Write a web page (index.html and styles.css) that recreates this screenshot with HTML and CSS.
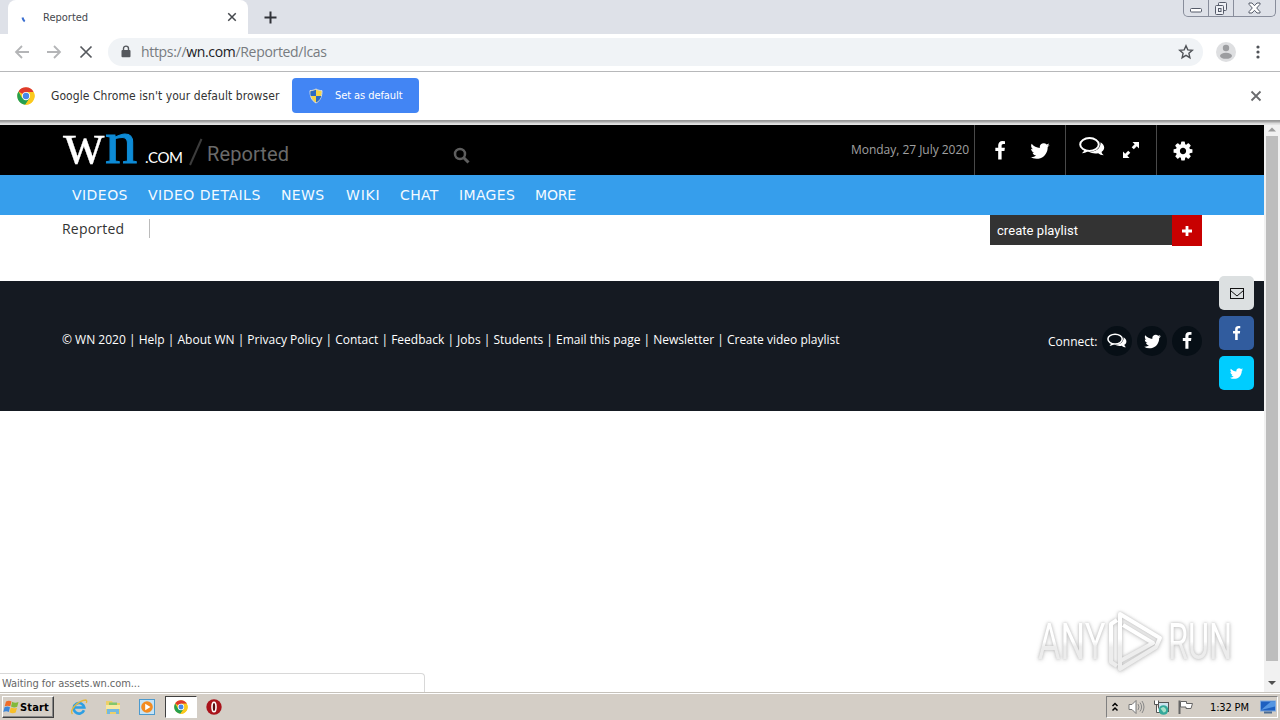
FILE: index.html
```html
<!DOCTYPE html>
<html lang="en">
<head>
<meta charset="utf-8">
<title>Reported</title>
<link rel="stylesheet" href="styles.css">
</head>
<body>
<svg class="defs" width="0" height="0">
  <defs>
    <linearGradient id="mark" x1="0" y1="0" x2="0" y2="1"><stop offset=".45" stop-color="#fff"/><stop offset=".6" stop-color="#ededed"/></linearGradient>
    <symbol id="facebook" viewBox="0 0 1792 1792"><path d="M1343 12v264h-157q-86 0-116 36t-30 108v189h293l-39 296h-254v759h-306v-759h-255v-296h255v-218q0-186 104-288.5t277-102.5q147 0 228 12z"/></symbol>
    <symbol id="twitter" viewBox="0 0 1792 1792"><path d="M1684 408q-67 98-162 167 1 14 1 42 0 130-38 259.500t-115.500 248.500-184.500 210.500-258 146-323 54.500q-271 0-496-145 35 4 78 4 225 0 401-138-105-2-188-64.500t-114-159.500q33 5 61 5 43 0 85-11-112-23-185.500-111.500t-73.500-205.500v-4q68 38 146 41-66-44-105-115t-39-154q0-88 44-163 121 149 294.500 238.500t371.500 99.500q-8-38-8-74 0-134 94.500-228.500t228.500-94.500q140 0 236 102 109-21 205-78-37 115-142 178 93-10 186-50z"/></symbol>
    <symbol id="cog" viewBox="0 0 1792 1792"><path d="M1152 896q0-106-75-181t-181-75-181 75-75 181 75 181 181 75 181-75 75-181zm512-109v222q0 12-8 23t-20 13l-185 28q-19 54-39 91 35 50 107 138 10 12 10 25t-9 23q-27 37-99 108t-94 71q-12 0-26-9l-138-108q-44 23-91 38-16 136-29 186-7 28-36 28h-222q-14 0-24.500-8.500t-11.500-21.500l-28-184q-49-16-90-37l-141 107q-10 9-25 9-14 0-25-11-126-114-165-168-7-10-7-23 0-12 8-23 15-21 51-66.500t54-70.500q-27-50-41-99l-183-27q-13-2-21-12.500t-8-23.500v-222q0-12 8-23t19-13l186-28q14-46 39-92-40-57-107-138-10-12-10-24 0-10 9-23 26-36 98.500-107.500t94.500-71.500q13 0 26 10l138 107q44-23 91-38 16-136 29-186 7-28 36-28h222q14 0 24.500 8.500t11.500 21.500l28 184q49 16 90 37l142-107q9-9 24-9 13 0 25 10 129 119 165 170 7 8 7 22 0 12-8 23-15 21-51 66.500t-54 70.500q26 50 41 98l183 28q13 2 21 12.500t8 23.500z"/></symbol>
    <symbol id="comments" viewBox="0 0 26 20"><ellipse cx="10.500" cy="7.500" rx="9.300" ry="6.400" fill="none" stroke="currentColor" stroke-width="2"/><path d="M5.500 12.500C5 14.500 4 15.500 2.800 16.200c3 0 5-1 6.500-2.400zM21.500 5.200c4.800 2.800 4.700 7.300 1 9.800.4 1.600 1.300 2.400 2.200 3.200-2.400 0-4-.7-5.500-2-3.600.6-6.700.1-9-1.200 7-.2 11.800-4 11.300-9.800z"/></symbol>
    <symbol id="expand" viewBox="0 0 18 18"><path d="M10.500 1H17v6.500l-2.200-2.200-3 3-2.100-2.100 3-3zM7.500 17H1v-6.500l2.200 2.200 3-3 2.100 2.100-3 3z"/></symbol>
    <symbol id="cross" viewBox="0 0 12 12"><path d="M1.500 1.500l9 9m0-9l-9 9" fill="none" stroke="currentColor" stroke-width="1.800"/></symbol>
    <symbol id="stop" viewBox="0 0 16 16"><path d="M2.500 2.500l11 11m0-11l-11 11" fill="none" stroke="currentColor" stroke-width="1.700"/></symbol>
    <symbol id="chrome" viewBox="0 0 48 48"><circle cx="24" cy="24" r="23" fill="#fbc91d"/><path d="M24 24L4 12A23 23 0 0 1 44 13H24z" fill="#df3a2c"/><path d="M24 24L14 30 4 12A23 23 0 0 0 22 47L34 30z" fill="#26a04f"/><path d="M24 13h20A23 23 0 0 1 22 47l12-17z" fill="#fbc91d"/><circle cx="24" cy="24" r="11" fill="#fff"/><circle cx="24" cy="24" r="8.500" fill="#4688e8"/></symbol>
  </defs>
</svg>

<header class="tabstrip">
  <div class="tab">
    <svg class="spinner" width="16" height="16" viewBox="0 0 16 16"><path d="M4.500 6.500q.4 2.400 2.200 3.900" fill="none" stroke="#3b6fd0" stroke-width="2"/></svg>
    <span class="tab-title">Reported</span>
    <svg class="tab-close" width="10" height="10"><use href="#cross"/></svg>
  </div>
  <svg class="new-tab" width="13" height="13" viewBox="0 0 13 13"><path d="M6.500 .5v12M.5 6.500h12" stroke="#303238" stroke-width="2"/></svg>
  <div class="window-controls">
    <span class="min"><svg width="14" height="7" viewBox="0 0 14 7"><rect x="1.500" y="1.500" width="11" height="3.500" rx="1" fill="#fff" stroke="#555b69"/></svg></span>
    <span class="max"><svg width="14" height="14" viewBox="0 0 14 14" fill="#eef0f5" stroke="#555b69"><rect x="4.500" y=".5" width="8" height="8" rx="1"/><rect x="1.500" y="3.500" width="8" height="9" rx="1"/><rect x="4.500" y="6.500" width="2.500" height="3"/></svg></span>
    <span class="exit"><svg width="13" height="12" viewBox="0 0 13 12"><path d="M1 1h3l2.500 2.700L9 1h3v1.300L8.700 6 12 9.700V11H9L6.500 8.300 4 11H1V9.700L4.300 6 1 2.300z" fill="#fff" stroke="#555b69"/></svg></span>
  </div>
</header>

<div class="toolbar">
  <svg class="nav-icon dim" width="16" height="14" viewBox="0 0 16 14"><path d="M15 7H2M8 1L2 7l6 6" fill="none" stroke="currentColor" stroke-width="1.800"/></svg>
  <svg class="nav-icon dim" width="16" height="14" viewBox="0 0 16 14"><path d="M1 7h13M8 1l6 6-6 6" fill="none" stroke="currentColor" stroke-width="1.800"/></svg>
  <svg class="nav-icon" width="16" height="16"><use href="#stop"/></svg>
  <div class="omnibox">
    <svg width="10" height="13" viewBox="0 0 10 13"><path d="M2.500 6V3.600a2.500 2.500 0 0 1 5 0V6" fill="none" stroke="#55585d" stroke-width="1.400"/><rect x=".5" y="5" width="9" height="7.200" rx="1" fill="#55585d"/></svg>
    <span class="url">https://<b>wn.com</b>/Reported/lcas</span>
    <svg class="star" width="16" height="16" viewBox="0 0 16 16"><path d="M8 1.800l1.800 4.100 4.500.4-3.400 3 1 4.400L8 11.400l-3.900 2.300 1-4.400-3.400-3 4.500-.4z" fill="none" stroke="#505358" stroke-width="1.400"/></svg>
  </div>
  <svg class="avatar" width="20" height="20" viewBox="0 0 20 20"><circle cx="10" cy="10" r="10" fill="#dedfe1"/><circle cx="10" cy="6" r="3.200" fill="#9c9da0"/><ellipse cx="10" cy="13.800" rx="6" ry="3" fill="#9c9da0"/></svg>
  <svg class="menu" width="4" height="14" viewBox="0 0 4 14" fill="#505358"><circle cx="2" cy="2" r="1.600"/><circle cx="2" cy="7" r="1.600"/><circle cx="2" cy="12" r="1.600"/></svg>
</div>

<div class="infobar">
  <svg width="18" height="18"><use href="#chrome"/></svg>
  <span class="info-text">Google Chrome isn't your default browser</span>
  <button class="default-btn">
    <svg width="14" height="16" viewBox="0 0 14 16"><path d="M7 1c2 1.200 4 1.600 6 1.600C13.200 8 11.500 12.500 7 15 2.500 12.500.8 8 1 2.600 3 2.600 5 2.200 7 1z" fill="#f5d547" stroke="#d8dde4"/><path d="M7 1.800V8H1.700C1.300 6 1.400 4 1.500 3.200 3.500 3 5 2.700 7 1.800zM7 8h5.300c-.7 3-2.500 5-5.300 6.400z" fill="#2c6bc4"/></svg>
    <span>Set as default</span>
  </button>
  <svg class="info-close" width="12" height="12"><use href="#cross"/></svg>
</div>

<div class="viewport">
  <main class="page">
    <div class="site-head">
      <div class="logo"><span class="w">w</span><span class="n">n</span><span class="com">.COM</span></div>
      <svg class="slash" width="14" height="28" viewBox="0 0 14 28"><path d="M1 27L12.500 1" stroke="#3c3c3c" stroke-width="2"/></svg>
      <span class="query">Reported</span>
      <svg class="search" width="17" height="17" viewBox="0 0 17 17" fill="none" stroke="#5e5e5e"><circle cx="7" cy="7" r="5" stroke-width="2.500"/><path d="M10.500 10.500l5 5" stroke-width="3"/></svg>
      <span class="date">Monday, 27 July 2020</span>
      <div class="tools social"><svg width="20" height="20"><use href="#facebook"/></svg><svg width="22" height="22"><use href="#twitter"/></svg></div>
      <div class="tools talk"><svg class="bubbles" width="26" height="20"><use href="#comments"/></svg><svg width="18" height="18"><use href="#expand"/></svg></div>
      <div class="tools settings"><svg width="22" height="22"><use href="#cog"/></svg></div>
    </div>
    <nav class="site-nav">
      <a class="n1">VIDEOS</a><a class="n2">VIDEO DETAILS</a><a class="n3">NEWS</a><a class="n4">WIKI</a><a class="n5">CHAT</a><a class="n6">IMAGES</a><a class="n7">MORE</a>
    </nav>
    <div class="subhead">
      <span class="crumb">Reported</span>
      <div class="playlist"><span class="playlist-name">create playlist</span><span class="add"><svg width="10" height="10" viewBox="0 0 10 10"><path d="M5 0v10M0 5h10" stroke="#fff" stroke-width="2.800"/></svg></span></div>
    </div>
    <footer class="site-foot">
      <p class="links">© WN 2020 | Help | About WN | Privacy Policy | Contact | Feedback | Jobs | Students | Email this page | Newsletter | Create video playlist</p>
      <div class="connect">
        <span class="connect-label">Connect:</span>
        <span class="disc"><svg width="20" height="16"><use href="#comments"/></svg></span>
        <span class="disc"><svg width="19" height="19"><use href="#twitter"/></svg></span>
        <span class="disc"><svg width="18" height="18"><use href="#facebook"/></svg></span>
      </div>
    </footer>
    <aside class="share">
      <span class="mail"><svg width="14" height="11" viewBox="0 0 14 11" fill="none" stroke="#111"><rect x=".5" y=".5" width="13" height="10"/><path d="M.5 2.500L7 8l6.500-5.500"/></svg></span>
      <span class="fb"><svg width="15" height="15"><use href="#facebook"/></svg></span>
      <span class="tw"><svg width="15" height="15"><use href="#twitter"/></svg></span>
    </aside>
    <div class="watermark">
      <span class="any">ANY</span>
      <svg width="58" height="64" viewBox="0 0 58 64" fill="none" stroke-linejoin="round"><path d="M14 51V4l40 24-4 9L14 59V51l33-18-30-18" stroke="url(#mark)" stroke-width="4"/><path d="M11 10l-6 4v38l6 4" stroke="url(#mark)" stroke-width="4"/></svg>
      <span class="run">RUN</span>
    </div>
    <div class="status">Waiting for assets.wn.com...</div>
  </main>
  <div class="scrollbar">
    <svg width="16" height="11" viewBox="0 0 16 11"><path d="M4 6.500l4-4 4 4z" fill="#9b9b9b"/></svg>
    <div class="thumb"></div>
    <svg class="down" width="16" height="11" viewBox="0 0 16 11"><path d="M4 4h8l-4 4z" fill="#505050"/></svg>
  </div>
</div>

<div class="taskbar">
  <div class="start">
    <svg width="17" height="16" viewBox="0 0 17 16"><path d="M3 2.500Q6 .8 8.500 2.500L7.300 7.300Q4.500 6 1.700 7.300z" fill="#ef6c28"/><path d="M9.200 2.800Q12 4.500 15.500 3L14.200 7.800Q11 9.200 8 7.500z" fill="#82b93c"/><path d="M1.500 8.200Q4.500 7 7 8.300L5.800 13Q3.300 11.500.3 13z" fill="#3c86d8"/><path d="M7.800 8.500Q11 10 14 8.700L12.700 13.500Q9.500 15 6.500 13.300z" fill="#f7bf2a"/></svg>
    <span>Start</span>
  </div>
  <div class="apps">
    <svg width="18" height="18" viewBox="0 0 18 18" fill="none"><path d="M14 12.300A5.300 5.300 0 1 1 14.300 9.500H5" stroke="#2d9fe3" stroke-width="2.600"/><path d="M2.500 16C-1 12 8 2.500 16 2c1.300 1 .8 2 .2 3" stroke="#e5b83c" stroke-width="1.300"/></svg>
    <svg width="18" height="18" viewBox="0 0 18 18"><path d="M2 3h6l1 2h7v11H2z" fill="#edcf69"/><path d="M5 4.500h8v4H5z" fill="#83c66b"/><path d="M2 7h14v4H2z" fill="#f7e9a2"/><path d="M3 16v-5h12v5h-3v-2H6v2z" fill="#74b9df"/></svg>
    <svg width="18" height="18" viewBox="0 0 18 18"><rect x="1.500" y="1.500" width="15" height="15" fill="#c5e3f6" stroke="#4c9ace"/><circle cx="9" cy="9" r="5.800" fill="#f38b20"/><path d="M7.200 5.800L12.500 9l-5.300 3.200z" fill="#fff"/></svg>
    <span class="active"><svg width="14" height="14"><use href="#chrome"/></svg></span>
    <svg width="18" height="18" viewBox="0 0 18 18"><circle cx="9" cy="9" r="7.700" fill="#a9131b"/><ellipse cx="9" cy="9" rx="2" ry="4.700" fill="#5a0d12" stroke="#fff" stroke-width="1.600"/></svg>
  </div>
  <div class="tray">
    <svg class="chev" width="8" height="12" viewBox="0 0 8 12"><path d="M1.500 5L4 2.500 6.500 5M1.500 9.500L4 7l2.500 2.500" fill="none" stroke="#000" stroke-width="1.500"/></svg>
    <svg class="sound" width="17" height="16" viewBox="0 0 17 16"><path d="M1 5.500h3l4-4v13l-4-4H1z" fill="#fff" stroke="#777"/><path d="M10 5q2 3 0 6M12 3.500q3.200 4.500 0 9M14 2q4 6 0 12" fill="none" stroke="#888"/></svg>
    <svg class="net" width="17" height="17" viewBox="0 0 17 17"><rect x="5.500" y="3.500" width="10" height="9" fill="#cbe4ee" stroke="#555"/><path d="M1.500 1.500v4h4v-4M3.500 5.500v8h4" fill="#fff" stroke="#555"/><circle cx="10.500" cy="11" r="4.800" fill="#35a99b"/><path d="M7.500 9.500q3-3 5 0t-2 4" fill="#a7e0c8"/></svg>
    <svg class="flag" width="17" height="16" viewBox="0 0 17 16"><path d="M2.500 15V1.500" stroke="#666" stroke-width="2"/><path d="M3.500 2.500h6v2h6l-1.500 5H9v-1.500H3.500z" fill="#fff" stroke="#666"/></svg>
    <span class="clock">1:32 PM</span>
    <svg width="16" height="14" viewBox="0 0 16 14"><rect x=".5" y="1" width="15" height="10" fill="#1d5fc0" stroke="#7fa9df"/><path d="M1 10L11 1.500h4v5z" fill="#5596e2"/><path d="M4 12.500h8" stroke="#4d6c92" stroke-width="2"/></svg>
  </div>
</div>
</body>
</html>
```

FILE: styles.css
```css
* { box-sizing: border-box; }
body { margin: 0; width: 1280px; height: 720px; overflow: hidden; display: flex; flex-direction: column; background: #fff; font-family: "Open Sans", "Noto Sans", sans-serif; color: #333; fill: currentColor; }
svg { display: block; flex: none; }
span, a, p { white-space: nowrap; }
.defs { position: absolute; }

.tabstrip { height: 34px; flex: none; display: flex; background: #dee1e8; padding-left: 8px; }
.tab { width: 240px; display: flex; align-items: center; padding-left: 10px; background: #fff; border-radius: 8px 8px 0 0; color: #45484d; }
.spinner { margin-top: 3px; }
.tab-title { margin-left: 9px; width: 184px; font-family: "DejaVu Sans Condensed", "DejaVu Sans", sans-serif; font-stretch: condensed; font-size: 11px; letter-spacing: 0; }
.new-tab { margin: 11px 0 0 16px; }
.window-controls { margin: 0 4px 0 auto; height: 17px; display: flex; border: 1px solid #888d9b; border-top: 0; border-radius: 0 0 5px 5px; color: #555b69; }
.window-controls span { display: flex; justify-content: center; border-right: 1px solid #888d9b; }
.window-controls .min { width: 25px; padding-top: 7px; }
.window-controls .max { width: 25px; padding-top: 2px; }
.window-controls .exit { width: 41px; padding-top: 2px; border: 0; }

.toolbar { height: 38px; flex: none; display: flex; align-items: center; padding: 0 20px 2px 14px; border-bottom: 1px solid #b7b8ba; color: #56595e; }
.nav-icon { margin-right: 16px; }
.nav-icon.dim { color: #b4b5b7; }
.omnibox { width: 1095px; height: 28px; margin-left: -2px; display: flex; align-items: center; padding: 0 9px 0 13px; border-radius: 14px; background: #f0f3f6; }
.url { margin-left: 10px; font-size: 14px; letter-spacing: -.32px; color: #777b80; }
.url b { font-weight: 400; color: #202124; }
.star { margin-left: auto; }
.avatar { margin-left: 13px; }
.menu { margin-left: auto; }

.infobar { height: 53px; flex: none; display: flex; align-items: center; padding: 0 18px 6px 17px; background: linear-gradient(#fff 48px, #929292 48px, #aaa 50px, #d4d4d4 51px, #e8e8e8 53px); color: #6a6b6e; }
.info-text { width: 240px; margin-left: 17px; font-family: "DejaVu Sans Condensed", "DejaVu Sans", sans-serif; font-stretch: condensed; font-size: 12px; letter-spacing: .07px; color: #333; text-indent: -1px; }
.default-btn { width: 127px; height: 35px; display: flex; align-items: center; gap: 12px; padding: 0 0 0 17px; border: 0; border-radius: 4px; background: #4285f4; color: #fff; font-family: "DejaVu Sans Condensed", "DejaVu Sans", sans-serif; font-stretch: condensed; font-size: 11px; letter-spacing: -.08px; }
.info-close { margin-left: auto; }

.viewport { flex: 1; display: flex; min-height: 0; }
.page { width: 1264px; position: relative; }
.scrollbar { width: 16px; display: flex; flex-direction: column; background: #f1f1f1; }
.thumb { width: 12px; height: 525px; margin-left: 2px; background: #bdbdbd; }
.down { margin-top: auto; margin-bottom: 4px; }

.site-head { height: 50px; display: flex; align-items: flex-start; padding-left: 62px; background: #000; color: #fff; }
.logo { width: 127px; height: 50px; display: flex; align-items: baseline; line-height: 34px; }
.logo .w, .logo .n { font-family: "Liberation Serif", serif; font-size: 60px; transform-origin: left; }
.logo .w { width: 43px; padding-left: 1px; transform: scaleX(.96); -webkit-text-stroke: .3px; }
.logo .n { width: 40px; color: #0d8bd6; font-size: 62px; transform: scaleX(1.04); -webkit-text-stroke: 1px; }
.logo .com { font-family: Lato, sans-serif; font-size: 15px; letter-spacing: -.3px; }
.slash { margin-top: 13px; }
.query { width: 246px; margin: 17px 0 0 4px; font-family: Roboto, sans-serif; font-size: 20px; line-height: 24px; letter-spacing: .1px; color: #6a6a6a; }
.search { margin-top: 22px; }
.date { width: 123px; margin: 15px 0 0 381px; font-size: 12px; line-height: 20px; letter-spacing: -.03px; color: #a0a0a0; }
.tools { height: 50px; width: 91px; display: flex; align-items: center; border-left: 1px solid #494949; padding-top: 2px; }
.social { padding-left: 15px; gap: 19px; }
.talk { padding-left: 13px; gap: 17px; }
.bubbles { margin-top: -8px; }
.talk svg:last-child { margin-top: -2px; }
.settings { padding-left: 15px; }

.site-nav { height: 40px; display: flex; align-items: center; padding-left: 72px; background: #369eec; color: #f4faff; font-family: "DejaVu Sans", sans-serif; font-size: 14px; letter-spacing: .35px; }
.site-nav .n1 { width: 76px; letter-spacing: .45px; }
.site-nav .n2 { width: 133px; letter-spacing: .5px; }
.site-nav .n3 { width: 65px; }
.site-nav .n4 { width: 54px; letter-spacing: .8px; }
.site-nav .n5 { width: 59px; }
.site-nav .n6 { width: 76px; }
.site-nav .n7 { letter-spacing: -.2px; }

.subhead { height: 66px; display: flex; justify-content: space-between; padding: 0 62px; }
.crumb { width: 88px; height: 19px; margin-top: 4px; border-right: 1px solid #bbb; font-size: 14px; line-height: 20px; letter-spacing: .2px; }
.playlist { width: 212px; height: 30px; display: flex; background: #333; color: #fff; }
.playlist-name { width: 182px; padding-left: 7px; font-family: Roboto, sans-serif; font-size: 13px; line-height: 31px; letter-spacing: .05px; }
.add { width: 30px; height: 31px; display: flex; align-items: center; justify-content: center; background: #c80000; }

.site-foot { height: 130px; display: flex; justify-content: space-between; padding: 45px 62px 0; background: #151a22; color: #fff; }
.links { margin: 5px 0 0; font-size: 12px; line-height: 18px; letter-spacing: .004px; }
.connect { height: 30px; display: flex; align-items: center; gap: 5px; font-size: 12px; }
.connect-label { width: 49px; }
.disc { width: 30px; height: 30px; display: flex; align-items: center; justify-content: center; border-radius: 50%; background: #070f16; }

.share { position: absolute; left: 1219px; top: 151px; display: flex; flex-direction: column; gap: 6px; color: #fff; }
.share span { width: 35px; height: 34px; display: flex; align-items: center; justify-content: center; border-radius: 5px; }
.share .mail { background: #dce0e1; }
.share .fb { background: #315c9e; }
.share .tw { background: #00cdff; }

.watermark { position: absolute; left: 1038px; top: 484px; display: flex; align-items: center; font-family: Roboto, "Liberation Sans", sans-serif; font-size: 50px; line-height: 64px; filter: drop-shadow(0 0 1.5px #bbb) drop-shadow(0 1px 2px #e2e2e2); }
.watermark span { flex: none; width: 104px; padding-top: 1px; transform-origin: left; background: linear-gradient(#fff 50%, #ececec 58%); background-clip: text; -webkit-background-clip: text; color: transparent; }
.watermark .any { margin-right: -36px; transform: scaleX(.69); }
.watermark .run { margin-left: 4px; transform: scaleX(.65); }
.status { position: absolute; left: 0; bottom: 0; width: 425px; height: 19px; padding-left: 2px; border: 1px solid #d8d8d8; border-width: 1px 1px 0 0; border-radius: 0 4px 0 0; background: #fff; color: #666; font-family: "DejaVu Sans Condensed", "DejaVu Sans", sans-serif; font-stretch: condensed; font-size: 11px; line-height: 19px; letter-spacing: -.06px; }

.taskbar { height: 28px; flex: none; display: flex; align-items: center; padding: 1px 2px 0; border-top: 1px solid #c6c2bb; background: #d4cec6; box-shadow: inset 0 1px #fff; color: #000; }
.start { width: 52px; height: 22px; display: flex; align-items: center; border: 1px solid; border-color: #fff #404040 #404040 #fff; box-shadow: inset -1px -1px #888; font-family: "DejaVu Sans Condensed", "DejaVu Sans", sans-serif; font-stretch: condensed; font-size: 11px; font-weight: 700; }
.start span { letter-spacing: .15px; }
.apps { display: flex; align-items: center; gap: 16px; margin-left: 16px; }
.active { width: 32px; height: 22px; margin: 0 -8px 0 -7px; display: flex; align-items: center; justify-content: center; background: #fff; border: 1px solid; border-color: #404040 #fff #fff #404040; }
.tray { width: 172px; height: 22px; margin-left: auto; display: flex; align-items: center; padding-left: 4px; border: 1px solid; border-color: #808080 #fff #fff #808080; font-family: "DejaVu Sans Condensed", "DejaVu Sans", sans-serif; font-stretch: condensed; font-size: 11px; }
.sound { margin-left: 9px; }
.net { margin-left: 8px; }
.flag { margin-left: 7px; }
.clock { width: 50px; margin-left: 16px; letter-spacing: -.15px; }
```
